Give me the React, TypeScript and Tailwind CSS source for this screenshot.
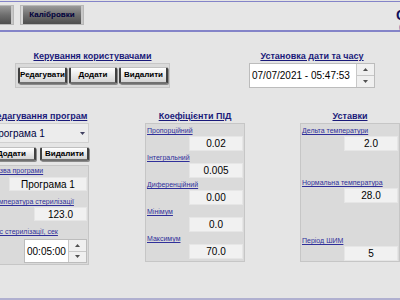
import React from "react";

const font = { fontFamily: '"Liberation Sans", Arial, sans-serif' };

function DarkButton({ label, className = "" }: { label: string; className?: string }) {
  return (
    <div
      className={`h-[20px] border border-[#b8b8b8] bg-gradient-to-b from-[#9a9a9a] via-[#6e6e6e] to-[#4e4e4e] shadow-[inset_2px_0_0_#d8d8d8,inset_-2px_0_0_#c8c8c8] flex items-center justify-center text-[8px] font-bold text-[#00003c] ${className}`}
    >
      {label}
    </div>
  );
}

function BevelButton({ label, className = "" }: { label: string; className?: string }) {
  return (
    <div
      className={`flex items-center justify-center border-x-2 border-[#404040] border-b-2 border-b-[#707070] border-t border-t-[#c0c0c0] rounded-[2px] bg-gradient-to-b from-white to-[#d4d4d4] text-[8px] font-bold text-black shadow-[1px_1px_0_#8a8a8a] ${className}`}
    >
      {label}
    </div>
  );
}

function Title({ children }: { children: React.ReactNode }) {
  return (
    <div className="h-[12px] leading-[12px] text-center text-[9px] font-bold text-[#1a1a7a] underline whitespace-nowrap">
      {children}
    </div>
  );
}

function Label({ children }: { children: React.ReactNode }) {
  return (
    <div className="h-[10px] leading-[10px] text-[7px] text-[#30309a] underline whitespace-nowrap pl-[1px]">
      {children}
    </div>
  );
}

function Value({ children, className = "" }: { children: React.ReactNode; className?: string }) {
  return (
    <div
      className={`bg-[#f1f1f1] border border-[#e6e6e6] flex items-center justify-center text-[10px] text-black ${className}`}
    >
      {children}
    </div>
  );
}

function Spinner() {
  return (
    <div className="w-[18px] flex flex-col border-l border-[#c8c8c8]">
      <div className="flex-1 bg-[#f0f0f0] border-b border-[#c8c8c8] flex items-center justify-center">
        <svg width="5" height="3" viewBox="0 0 5 3">
          <path d="M0 3 L2.5 0 L5 3 Z" fill="#505050" />
        </svg>
      </div>
      <div className="flex-1 bg-[#f0f0f0] flex items-center justify-center">
        <svg width="5" height="3" viewBox="0 0 5 3">
          <path d="M0 0 L2.5 3 L5 0 Z" fill="#505050" />
        </svg>
      </div>
    </div>
  );
}

export default function App() {
  return (
    <div
      className="w-[400px] h-[300px] overflow-hidden bg-[#e5e5e5] flex flex-col"
      style={font}
    >
      {/* Header */}
      <div className="mt-[1px] h-[31px] border-t border-b-2 border-[#8484c8] bg-[#e6e6e6] flex items-start pt-[3px] whitespace-nowrap">
        <DarkButton label="Головна" className="w-[64px] ml-[-50px] shrink-0" />
        <DarkButton label="Калібровки" className="w-[64px] ml-[6px] shrink-0" />
        <div className="ml-[312px] shrink-0 flex flex-col leading-none">
          <span className="text-[14px] font-bold text-[#10105a] mt-[3px]">Стерилізатор</span>
          <span className="text-[7px] text-[#3a3a9a] mt-[1px] ml-[3px]">(версія 1.0)</span>
        </div>
      </div>

      {/* Content */}
      <div className="flex-1 flex flex-col">
        {/* Top row */}
        <div className="flex mt-[18px]">
          <div className="ml-[15px] w-[155px] shrink-0">
            <Title>Керування користувачами</Title>
            <div className="mt-[1px] h-[25px] bg-[#dadada] border border-[#c6c6c6] flex items-start pt-[3px] pl-[2px] gap-[2px]">
              <BevelButton label="Редагувати" className="w-[49px] h-[17px]" />
              <BevelButton label="Додати" className="w-[48px] h-[17px]" />
              <BevelButton label="Видалити" className="w-[49px] h-[17px]" />
            </div>
          </div>
          <div className="ml-[79px] w-[126px] shrink-0">
            <Title>Установка дати та часу</Title>
            <div className="mt-[1px] h-[25px] bg-white border border-[#bcbcbc] flex">
              <div className="flex-1 flex items-center pl-[2px] text-[10px] text-black whitespace-nowrap">
                07/07/2021 - 05:47:53
              </div>
              <Spinner />
            </div>
          </div>
        </div>

        {/* Bottom row */}
        <div className="flex mt-[22px]">
          {/* Column 1 */}
          <div className="ml-[-11px] w-[100px] shrink-0">
            <Title>Редагування програм</Title>
            <div className="mt-[1px] h-[20px] bg-[#ececec] border border-[#d0d0d0] flex items-center justify-between pr-[3px] text-[10px] text-[#000040]">
              <span className="pl-[1px]">Програма 1</span>
              <svg width="5" height="3" viewBox="0 0 5 3">
                <path d="M0 0 L2.5 3 L5 0 Z" fill="#404060" />
              </svg>
            </div>
            <div className="flex mt-[4px] h-[14px]">
              <BevelButton label="Додати" className="w-[49px] h-[14px] ml-[-2px]" />
              <BevelButton label="Видалити" className="w-[49px] h-[14px] ml-[4px]" />
            </div>
            <div className="mt-[4px] h-[100px] bg-[#dadada] border border-[#c6c6c6] flex flex-col">
              <Label>Назва програми</Label>
              <Value className="ml-[19px] mr-[1px] h-[14px] mt-[1px]">Програма 1</Value>
              <div className="mt-[6px]">
                <Label>Температура стерилізації</Label>
              </div>
              <Value className="ml-[44px] mr-[1px] h-[14px]">123.0</Value>
              <div className="mt-[6px]">
                <Label>Час стерилізації, сек</Label>
              </div>
              <div className="ml-[34px] mr-[1px] mt-[2px] h-[24px] bg-white border border-[#bcbcbc] flex">
                <div className="flex-1 flex items-center pl-[2px] text-[10px] text-black">00:05:00</div>
                <Spinner />
              </div>
            </div>
          </div>

          {/* Column 2 */}
          <div className="ml-[56px] w-[100px] shrink-0">
            <Title>Коефіцієнти ПІД</Title>
            <div className="mt-[1px] h-[139px] bg-[#dadada] border border-[#c6c6c6] pt-[2px] flex flex-col gap-[2px]">
              {[
                ["Пропорційний", "0.02"],
                ["Інтегральний", "0.005"],
                ["Диференційний", "0.00"],
                ["Мінімум", "0.0"],
                ["Максимум", "70.0"],
              ].map(([l, v]) => (
                <div key={l}>
                  <Label>{l}</Label>
                  <Value className="ml-[43px] mr-[1px] h-[15px]">{v}</Value>
                </div>
              ))}
            </div>
          </div>

          {/* Column 3 */}
          <div className="ml-[55px] w-[100px] shrink-0">
            <Title>Уставки</Title>
            <div className="mt-[1px] h-[139px] bg-[#dadada] border border-[#c6c6c6] pt-[2px] flex flex-col">
              <Label>Дельта температури</Label>
              <Value className="ml-[43px] mr-[1px] h-[15px]">2.0</Value>
              <div className="mt-[27px]">
                <Label>Нормальна температура</Label>
              </div>
              <Value className="ml-[43px] mr-[1px] h-[15px]">28.0</Value>
              <div className="mt-[33px]">
                <Label>Період ШИМ</Label>
              </div>
              <Value className="ml-[43px] mr-[1px] h-[15px]">5</Value>
            </div>
          </div>
        </div>
      </div>

      {/* Footer line */}
      <div className="h-[2px] bg-[#b0b0d0] shrink-0" />
    </div>
  );
}
